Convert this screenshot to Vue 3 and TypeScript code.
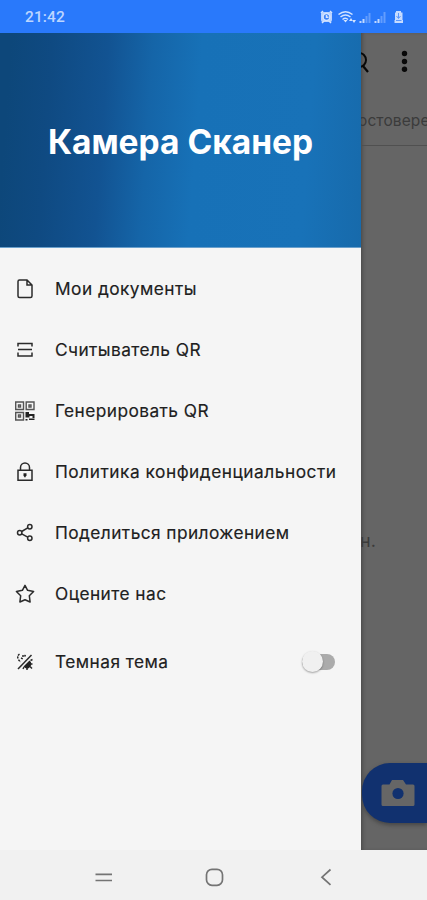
<script setup lang="ts">
import { ref } from 'vue'

interface MenuItem {
  icon: 'doc' | 'scan' | 'qr' | 'lock' | 'share' | 'star'
  label: string
  width: number
}

const items: MenuItem[] = [
  { icon: 'doc', label: 'Мои документы', width: 141.5 },
  { icon: 'scan', label: 'Считыватель QR', width: 145.5 },
  { icon: 'qr', label: 'Генерировать QR', width: 153.5 },
  { icon: 'lock', label: 'Политика конфиденциальности', width: 281 },
  { icon: 'share', label: 'Поделиться приложением', width: 234 },
  { icon: 'star', label: 'Оцените нас', width: 111 },
]

const dark = ref(false)
</script>

<template>
  <div class="phone">
    <header class="status">
      <span class="time">21:42</span>
      <svg class="signals" width="86" height="16" viewBox="0 0 86 16">
        <g fill="none" stroke="#d3e4ff" stroke-width="1.5">
          <rect x="1" y="3" width="11" height="10" rx="2" fill="#b9d3ff" stroke="none" />
          <circle cx="6.5" cy="8" r="3.4" fill="#3b82fa" />
          <path d="M6.5 6v2.300h2M1 4l2-2M12 4l-2-2M2 14l2-2M11 14l-2-2" />
          <path d="M18.500 5.500Q25.500 0 32.500 5.500M20.500 8Q25.500 4 30.500 8M22.500 10.500Q25.500 8 28 10.500" />
        </g>
        <path d="M23.500 11l2 2.500 2-2.500zM29 12l2-3 2 3zM32 11l2 3 2-3z" fill="#d3e4ff" />
        <g fill="#94bbff">
          <path d="M39.500 12h2v2h-2zM42.500 10h2v4h-2z" fill="#c2d9ff" />
          <path d="M45.500 7h2v7h-2zM48.500 4h2v10h-2z" opacity=".55" />
          <path d="M54.500 12h2v2h-2zM57.500 10h2v4h-2z" fill="#c2d9ff" />
          <path d="M60.500 7h2v7h-2zM63.500 3h2v11h-2z" opacity=".55" />
        </g>
        <path d="M76 2h5v1.500h1.500V11H83v3h-8.500v-3h.5V3.500h1z" fill="#c7dcff" />
        <path d="M78.500 4v5M76.500 7l2 2.500 2-2.500M76 11.500h5.500" fill="none" stroke="#5b96fc" />
      </svg>
    </header>

    <main class="body">
      <aside class="drawer">
        <div class="hero"><h1>Камера Сканер</h1></div>
        <nav class="menu">
          <a v-for="item in items" :key="item.icon" class="row">
            <svg class="icon" width="20" height="20" viewBox="0 0 20 20">
              <path v-if="item.icon === 'doc'" d="M4.500 1h7.500l5 5v11q0 1.500-1.500 1.500h-11Q3 18.500 3 17V2.500Q3 1 4.500 1zM12 1v5h5" />
              <path v-else-if="item.icon === 'scan'" d="M3 6.500V3.500h14v3M3 9.500h14M3 12.500v3.500h14v-3.500" />
              <g v-else-if="item.icon === 'qr'" class="qr">
                <path d="M.7 1h7.800v7.500H.7zM11.200 1h7.800v7.500h-7.800zM.7 11.500h7.800V19H.7z" />
                <path d="M3.500 4h2v2h-2zM14 4h2v2h-2zM3.500 14h2v2h-2z" />
                <path class="solid" d="M10.500 11h3.500v2h5.500v4h-2v-2h-3v1.500h-4zM10.500 18h2v1.500h-2zM14 17.500h5.500V19H14z" />
              </g>
              <g v-else-if="item.icon === 'lock'">
                <path d="M3 8.200h14v10H3zM5.500 8.200V5.500a4.500 4.500 0 0 1 9 0v2.700" />
                <path class="solid" d="M8.500 11.200h3v2L10 15.700l-1.500-2z" />
              </g>
              <g v-else-if="item.icon === 'share'">
                <circle cx="14.800" cy="3.700" r="2.200" /><circle cx="4.700" cy="9.700" r="2.200" /><circle cx="14.800" cy="15.200" r="2.200" />
                <path d="M6.700 8.500l6-3.600M6.700 10.800l6 3.300" />
              </g>
              <path v-else stroke-linejoin="round" d="M10 1.300l2.600 5 6 1.200-4.300 4.200.8 6.300-5.100-2.300L4.900 18l.8-6.300L1.400 7.500l6-1.200z" />
            </svg>
            <svg class="label" :width="item.width + 2" height="26">
              <text x="0" y="19" :textLength="item.width">{{ item.label }}</text>
            </svg>
          </a>
          <div class="row theme">
            <svg class="icon" width="20" height="20" viewBox="0 0 20 20">
              <path d="M3 17L16.500 3" />
              <path d="M4.500 2Q2 4 3 6.500T6 9.500M8 3v2M10.500 3l-1 1.500M6 6l2 1" stroke-dasharray="2 1" />
              <path class="solid" d="M8.500 14.500l6-6q3.500 3 .5 6.500t-6.500-.5z" />
              <path d="M15.500 8.500l2-1M15.500 12h2M15 14.500l2 2M12 15.500V18M9 15l-1 2" />
            </svg>
            <svg class="label" width="115" height="26">
              <text x="0" y="19" textLength="113">Темная тема</text>
            </svg>
            <button class="toggle" :class="{ on: dark }" role="switch" :aria-checked="dark" @click="dark = !dark">
              <span class="knob"></span>
            </button>
          </div>
        </nav>
      </aside>

      <section class="page">
        <div class="toolbar">
          <svg width="66" height="58" viewBox="0 0 66 58">
            <circle cx="-2" cy="27" r="7" fill="none" stroke="#080808" stroke-width="2" />
            <path d="M2 33l5 6" stroke="#080808" stroke-width="2.200" />
            <g fill="#080808"><circle cx="43.500" cy="20.500" r="2.700" /><circle cx="43.500" cy="28.500" r="2.700" /><circle cx="43.500" cy="36.300" r="2.700" /></g>
          </svg>
        </div>
        <div class="tabs"><span>остовере</span></div>
        <div class="empty"><span>н.</span></div>
        <div class="fab">
          <svg width="34" height="28" viewBox="0 0 34 28">
            <path d="M2 5.500h6.500L11 1h11l3 4.500h7q1.500 0 1.500 1.500v18.500q0 1.500-1.500 1.500H2Q.5 27 .5 25.500V7q0-1.500 1.500-1.500z" fill="#666" />
            <circle cx="17" cy="14.500" r="5.600" fill="#11316f" />
          </svg>
        </div>
      </section>
    </main>

    <footer class="nav">
      <svg width="427" height="50" viewBox="0 0 427 50" fill="none" stroke="#747474" stroke-width="1.700">
        <path d="M95.500 24.300h16.500M95.500 30.500h16.500" />
        <rect x="206.500" y="19.300" width="16" height="16" rx="5.500" />
        <path d="M330.500 19.500l-8.500 7.700 8.500 7.700" />
      </svg>
    </footer>
  </div>
</template>

<style>
body { background: #f1f1f1; }
</style>

<style scoped>
.phone { width: 427px; height: 900px; display: flex; flex-direction: column; overflow: hidden; font-family: Inter, "Noto Sans", sans-serif; background: #f1f1f1; }
.status { height: 33px; flex: none; box-sizing: border-box; display: flex; align-items: center; justify-content: space-between; padding: 1px 21px 0 25px; background: #2979fb; }
.time { font: 500 15.500px/20px Roboto, sans-serif; color: #bdd6ff; letter-spacing: .1px; }
.body { height: 817px; flex: none; display: flex; }
.drawer { width: 361px; height: 817px; flex: none; background: #f5f5f5; }
.hero { height: 215px; display: flex; align-items: center; justify-content: center; background: linear-gradient(94deg, #0d477a 3%, #0f4a82 14%, #125392 29%, #1565a8 41%, #1771b7 54%, #1872b8 84%, #176aab 100%); border-bottom: 1px solid #6aa0cc; box-sizing: border-box; }
h1 { margin: 3px 0 0; font-size: 33.500px; line-height: 44px; font-weight: 700; color: #fff; white-space: nowrap; }
.menu { padding-top: 10px; display: flex; flex-direction: column; }
.row { height: 61px; display: flex; align-items: center; padding: 0 26px 0 15px; }
.theme { margin-top: 7px; }
.icon { flex: none; margin-right: 20px; fill: none; stroke: #2b2b2b; stroke-width: 1.500; }
.icon .solid { fill: #222; stroke: none; }
.qr { stroke: #555; stroke-width: 1.400; }
.label { flex: none; overflow: visible; }
.label text { font-size: 17.300px; fill: #202020; stroke: #202020; stroke-width: .15px; }
.toggle { margin: 0 0 0 auto; padding: 0; border: 0; width: 33px; height: 16px; border-radius: 8px; background: #ababab; display: flex; align-items: center; }
.toggle.on { justify-content: flex-end; background: #8fb6f8; }
.knob { width: 21px; height: 21px; flex: none; border-radius: 50%; background: #f0f0f0; box-shadow: 0 1px 2px rgba(0, 0, 0, .35); }
.page { width: 66px; height: 817px; flex: none; overflow: hidden; background: #656565; display: flex; flex-direction: column; box-shadow: inset 3px 0 4px -2px #444; }
.toolbar { height: 58px; }
.tabs { height: 55px; box-sizing: border-box; border-bottom: 1px solid #505050; display: flex; align-items: center; padding-top: 5px; }
.tabs span { margin-left: -3px; font-size: 15.500px; color: #3b3b3b; letter-spacing: .1px; white-space: nowrap; }
.empty { flex: 1; padding-top: 383px; font-size: 18px; line-height: 24px; color: #3b3b3b; }
.empty span { margin-left: -1px; }
.fab { height: 60px; flex: none; margin: 0 0 27px 1px; border-radius: 28px 0 0 28px; background: #11316f; display: flex; align-items: center; padding-left: 19px; box-shadow: 0 2px 4px #444; }
.nav { height: 50px; flex: none; }
.nav svg, .toolbar svg { display: block; }
</style>
